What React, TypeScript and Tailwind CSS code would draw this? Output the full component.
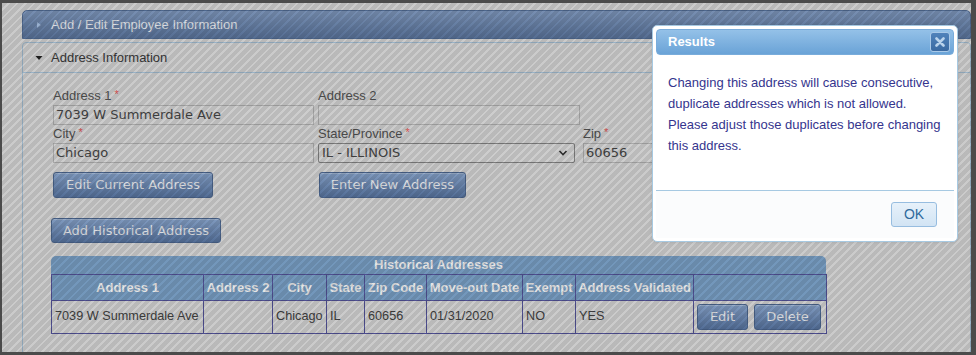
import React from 'react';

const VERDANA = 'font-[DejaVu_Sans,Verdana,sans-serif]';

function Req() {
  return <span className="ml-[3px] text-[11px] leading-none text-[#ee5a5a] relative -top-[2px]">*</span>;
}

function Label({ text, req }: { text: string; req?: boolean }) {
  return (
    <div className="h-[17px] leading-[16px] text-[13px] text-[#555555] whitespace-nowrap">
      {text}
      {req && <Req />}
    </div>
  );
}

function TextBox({ value, width }: { value?: string; width: number }) {
  return (
    <div
      className={`h-[20px] border border-[#bababa] bg-[#e4e4e4] px-[2px] text-[13px] font-normal leading-[18px] text-[#4a4a4a] whitespace-nowrap overflow-hidden ${VERDANA}`}
      style={{ width }}
    >
      {value}
    </div>
  );
}

function BlueButton({ label, className = '' }: { label: string; className?: string }) {
  return (
    <button
      className={`rounded-[3px] border border-[#4f6b96] bg-linear-to-b from-[#8eabd4] to-[#5c7aa7] text-[13px] text-[#f4f6fa] shadow-[inset_0_1px_0_rgba(255,255,255,0.25)] whitespace-nowrap ${VERDANA} ${className}`}
    >
      {label}
    </button>
  );
}

const columns = [
  { title: 'Address 1', w: 152 },
  { title: 'Address 2', w: 69 },
  { title: 'City', w: 54 },
  { title: 'State', w: 38 },
  { title: 'Zip Code', w: 62 },
  { title: 'Move-out Date', w: 96 },
  { title: 'Exempt', w: 53 },
  { title: 'Address Validated', w: 118 },
  { title: '', w: 133 },
];

const row = ['7039 W Summerdale Ave', '', 'Chicago', 'IL', '60656', '01/31/2020', 'NO', 'YES'];

function HistoryTable() {
  return (
    <div className="w-[775px] -ml-[2px] mt-[13px]">
      <div className="h-[18px] rounded-t-[5px] bg-[#80a8d0] text-center text-[13px] font-bold leading-[18px] text-white">
        Historical Addresses
      </div>
      <table className="w-[775px] border-collapse table-fixed">
        <thead>
          <tr>
            {columns.map((c, i) => (
              <th
                key={i}
                className="h-[26px] border border-[#5757a0] bg-[#80a8d0] px-[2px] text-center text-[13px] font-bold text-white whitespace-nowrap"
                style={{ width: c.w }}
              >
                {c.title}
              </th>
            ))}
          </tr>
        </thead>
        <tbody>
          <tr>
            {row.map((v, i) => (
              <td key={i} className="h-[33px] border border-[#5757a0] px-[3px] text-[12.7px] text-[#454545] whitespace-nowrap">
                {v}
              </td>
            ))}
            <td className="h-[33px] border border-[#5757a0] pl-[3px]">
              <div className="flex gap-[6px]">
                <BlueButton label="Edit" className="w-[51px] h-[26px]" />
                <BlueButton label="Delete" className="w-[67px] h-[26px]" />
              </div>
            </td>
          </tr>
        </tbody>
      </table>
    </div>
  );
}

function ResultsDialog() {
  return (
    <div className="absolute left-[650px] top-[22px] w-[306px] h-[217px] rounded-[5px] border border-[#a6c9e2] bg-white p-[3px] flex flex-col shadow-[0_0_3px_rgba(0,0,0,0.12)]">
      <div className="h-[26px] rounded-[4px] border border-[#79acdb] bg-linear-to-b from-[#94c1e8] to-[#6aa3d7] flex items-center justify-between pl-[11px] pr-[3px]">
        <span className="text-[13px] font-bold text-white">Results</span>
        <div className="w-[20px] h-[20px] rounded-[3px] border border-[#a9c9e8] bg-linear-to-b from-[#5083bb] to-[#3a6aa2] flex items-center justify-center">
          <svg width="10" height="10" viewBox="0 0 10 10">
            <path d="M1.5 1.5 L8.5 8.5 M8.5 1.5 L1.5 8.5" stroke="#b9d3ec" strokeWidth="2.6" strokeLinecap="round" />
          </svg>
        </div>
      </div>
      <div className="flex-1 px-[12px] pt-[17px] text-[13px] leading-[21px] text-[#35358e]">
        Changing this address will cause consecutive, duplicate addresses which is not allowed. Please adjust those duplicates before changing this address.
      </div>
      <div className="h-[48px] border-t border-[#a6c9e2] bg-[#fbfcfd] flex items-center justify-end pr-[17px]">
        <button className="w-[46px] h-[25px] rounded-[3px] border border-[#97bde0] bg-linear-to-b from-[#e7f1fa] to-[#d2e4f4] text-[14px] text-[#2f6a9c]">
          OK
        </button>
      </div>
    </div>
  );
}

export default function App() {
  return (
    <div className="w-[976px] h-[355px] bg-[#4b4b4b] pl-[2px] pt-[3px] pr-[5px] pb-[3px] font-[Liberation_Sans,Arial,sans-serif]">
      <div className="relative w-full h-full overflow-hidden bg-[#e2e2e2]">
        <div className="pl-[20px] pt-[7px]">
          <div className="h-[29px] rounded-t-[5px] border border-[#56729c] bg-linear-to-b from-[#859fc6] to-[#5f7aa3] flex items-center pl-[12px] text-[13px] text-[#f0f4fa]">
            <svg width="8" height="10" viewBox="0 0 8 10" className="mr-[8px]">
              <path d="M2 2 L6 5 L2 8 Z" fill="#a9c3e6" />
            </svg>
            Add / Edit Employee Information
          </div>

          <div className="mt-[3px] rounded-t-[4px] border border-[#aac6dc]">
            <div className="h-[30px] border-b border-[#aac6dc] flex items-center pl-[11px] text-[13px] text-[#3c3c3c]">
              <svg width="10" height="8" viewBox="0 0 10 8" className="mr-[7px]">
                <path d="M1.5 2 L8.5 2 L5 6 Z" fill="#222222" />
              </svg>
              Address Information
            </div>

            <div className="pl-[30px] pt-[15px] pb-[40px]">
              <div className="flex gap-[4px]">
                <div>
                  <Label text="Address 1" req />
                  <TextBox value="7039 W Summerdale Ave" width={261} />
                </div>
                <div>
                  <Label text="Address 2" />
                  <TextBox width={262} />
                </div>
              </div>

              <div className="mt-[1px] flex">
                <div>
                  <Label text="City" req />
                  <TextBox value="Chicago" width={261} />
                </div>
                <div className="ml-[4px]">
                  <Label text="State/Province" req />
                  <div
                    className={`w-[257px] h-[20px] rounded-[2px] border border-[#8a8a8a] bg-[#e4e4e4] pl-[3px] pr-[6px] flex items-center justify-between text-[13px] font-normal text-[#4a4a4a] ${VERDANA}`}
                  >
                    IL - ILLINOIS
                    <svg width="10" height="8" viewBox="0 0 10 8">
                      <path d="M1.5 2 L5 5.5 L8.5 2" stroke="#333333" strokeWidth="1.6" fill="none" />
                    </svg>
                  </div>
                </div>
                <div className="ml-[8px]">
                  <Label text="Zip" req />
                  <TextBox value="60656" width={140} />
                </div>
              </div>

              <div className="mt-[9px] flex">
                <BlueButton label="Edit Current Address" className="w-[160px] h-[26px]" />
                <BlueButton label="Enter New Address" className="ml-[106px] w-[147px] h-[26px]" />
              </div>

              <BlueButton label="Add Historical Address" className="mt-[20px] -ml-[2px] w-[170px] h-[25px]" />

              <HistoryTable />
            </div>
          </div>
        </div>

        {/* modal overlay */}
        <div className="absolute inset-0 pointer-events-none bg-[repeating-linear-gradient(135deg,rgba(0,0,0,0.18)_0px,rgba(0,0,0,0.18)_4px,rgba(0,0,0,0.1)_4px,rgba(0,0,0,0.1)_6px)]" />

        <ResultsDialog />
      </div>
    </div>
  );
}
